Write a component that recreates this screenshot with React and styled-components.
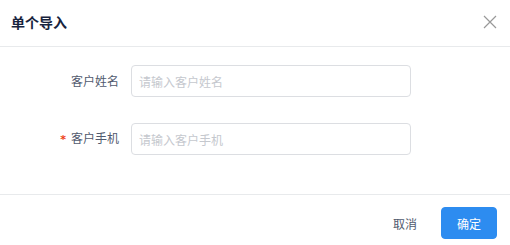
import React, { useState } from 'react'
import styled, { createGlobalStyle } from 'styled-components'

const GlobalStyle = createGlobalStyle`
  html, body {
    margin: 0;
    padding: 0;
    background: #fff;
    font-family: "Noto Sans CJK SC", "Noto Sans", sans-serif;
  }
`

const Modal = styled.div`
  width: 510px;
  background: #fff;
  display: flex;
  flex-direction: column;
`

const Header = styled.div`
  height: 46px;
  padding: 0 12px 0 11px;
  display: flex;
  align-items: center;
  justify-content: space-between;
  border-bottom: 1px solid #e8eaec;
`

const Title = styled.div`
  font-size: 14px;
  font-weight: 700;
  color: #17233d;
  line-height: 20px;
  margin-top: -2px;
`

const CloseBtn = styled.button`
  width: 16px;
  height: 16px;
  padding: 0;
  border: none;
  background: transparent;
  cursor: pointer;
  display: flex;
  align-items: center;
  justify-content: center;
  margin-top: -3px;
`

const Body = styled.form`
  padding: 18px 0 15px;
  display: flex;
  flex-direction: column;
  gap: 25px;
  margin-bottom: 23px;
`

const Row = styled.div`
  display: flex;
  align-items: center;
`

const Label = styled.label`
  width: 119px;
  padding-right: 12px;
  text-align: right;
  font-size: 12px;
  color: #515a6e;
  line-height: 32px;

  &::before {
    content: ${p => (p.$required ? '"*"' : 'none')};
    color: #ed4014;
    margin-right: 5px;
    font-family: "DejaVu Sans", sans-serif;
    font-weight: 700;
    font-size: 11px;
  }
`

const Input = styled.input`
  width: 280px;
  height: 32px;
  box-sizing: border-box;
  border: 1px solid #dcdee2;
  border-radius: 4px;
  padding: 0 7px;
  font-size: 12px;
  font-family: inherit;
  color: #515a6e;
  outline: none;

  &::placeholder {
    color: #c5c8ce;
  }
`

const Footer = styled.div`
  border-top: 1px solid #e8eaec;
  padding: 12px 13px 6px;
  display: flex;
  justify-content: flex-end;
  gap: 8px;
`

const Button = styled.button`
  width: 56px;
  height: 32px;
  border-radius: 4px;
  font-size: 12px;
  font-family: inherit;
  cursor: pointer;
  border: 1px solid ${p => (p.$primary ? '#2d8cf0' : 'transparent')};
  background: ${p => (p.$primary ? '#2d8cf0' : 'transparent')};
  color: ${p => (p.$primary ? '#fff' : '#515a6e')};
`

const App = () => {
  const [name, setName] = useState('')
  const [phone, setPhone] = useState('')

  return (
    <>
      <GlobalStyle />
      <Modal>
        <Header>
          <Title>单个导入</Title>
          <CloseBtn aria-label="close">
            <svg width="14" height="14" viewBox="0 0 14 14">
              <path d="M1 1L13 13M13 1L1 13" stroke="#999" strokeWidth="1.2" fill="none" />
            </svg>
          </CloseBtn>
        </Header>
        <Body onSubmit={e => e.preventDefault()}>
          <Row>
            <Label>客户姓名</Label>
            <Input placeholder="请输入客户姓名" value={name} onChange={e => setName(e.target.value)} />
          </Row>
          <Row>
            <Label $required>客户手机</Label>
            <Input placeholder="请输入客户手机" value={phone} onChange={e => setPhone(e.target.value)} />
          </Row>
        </Body>
        <Footer>
          <Button>取消</Button>
          <Button $primary>确定</Button>
        </Footer>
      </Modal>
    </>
  )
}

export default App
